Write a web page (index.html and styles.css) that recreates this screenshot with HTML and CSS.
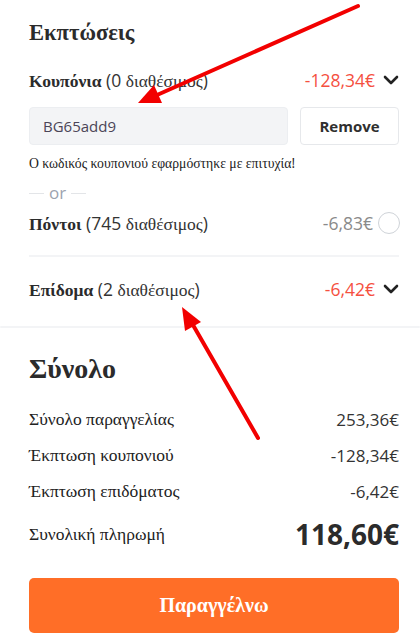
FILE: index.html
```html
<!DOCTYPE html>
<html lang="el">
<head>
<meta charset="utf-8">
<title>Εκπτώσεις</title>
<link rel="stylesheet" href="styles.css">
</head>
<body>
<div class="page">
  <section class="section discounts">
    <h2 class="title gr">Εκπτώσεις</h2>

    <div class="row coupon-row">
      <div class="label"><b class="gr">Κουπόνια</b> (0 <span class="gr">διαθέσιμος</span>)</div>
      <div class="value">
        <span class="amount red">-128,34€</span>
        <svg class="chev" width="16" height="10" viewBox="0 0 16 10"><path d="M2 2l6 6 6-6" fill="none" stroke="#222" stroke-width="2.6" stroke-linecap="round" stroke-linejoin="round"/></svg>
      </div>
    </div>

    <div class="coupon-form">
      <div class="code-input">BG65add9</div>
      <button class="remove-btn">Remove</button>
    </div>
    <p class="success gr">Ο κωδικός κουπονιού εφαρμόστηκε με επιτυχία<span class="os">!</span></p>

    <div class="or"><span class="or-line"></span><span class="or-text">or</span><span class="or-line"></span></div>

    <div class="row points-row">
      <div class="label"><b class="gr">Πόντοι</b> (745 <span class="gr">διαθέσιμος</span>)</div>
      <div class="value">
        <span class="amount gray">-6,83€</span>
        <span class="radio"></span>
      </div>
    </div>

    <div class="sep"></div>

    <div class="row bonus-row">
      <div class="label"><b class="gr">Επίδομα</b> (2 <span class="gr">διαθέσιμος</span>)</div>
      <div class="value">
        <span class="amount red">-6,42€</span>
        <svg class="chev" width="16" height="10" viewBox="0 0 16 10"><path d="M2 2l6 6 6-6" fill="none" stroke="#222" stroke-width="2.6" stroke-linecap="round" stroke-linejoin="round"/></svg>
      </div>
    </div>
  </section>

  <div class="divider-full"></div>

  <section class="section totals">
    <h2 class="big-title gr">Σύνολο</h2>
    <div class="trow"><span class="gr">Σύνολο παραγγελίας</span><span class="tval">253,36€</span></div>
    <div class="trow"><span class="gr">Έκπτωση κουπονιού</span><span class="tval">-128,34€</span></div>
    <div class="trow"><span class="gr">Έκπτωση επιδόματος</span><span class="tval">-6,42€</span></div>
    <div class="trow final"><span class="gr">Συνολική πληρωμή</span><span class="grand">118,60€</span></div>
    <button class="order-btn gr">Παραγγέλνω</button>
  </section>

  <svg class="annot" width="420" height="641" viewBox="0 0 420 641">
    <line x1="358" y1="6" x2="157" y2="95" stroke="#f20000" stroke-width="4" stroke-linecap="round"/>
    <polygon points="138,103 162,103 154,85" fill="#f20000"/>
    <line x1="258" y1="438" x2="193" y2="325" stroke="#f20000" stroke-width="4" stroke-linecap="round"/>
    <polygon points="182,307 201,322 185,331" fill="#f20000"/>
  </svg>
</div>
</body>
</html>
```

FILE: styles.css
```css
* { box-sizing: border-box; }
html, body { margin: 0; padding: 0; background: #fff; }
body {
  font-family: "Open Sans", "DejaVu Sans", sans-serif;
  color: #333;
  width: 420px;
  height: 641px;
  overflow: hidden;
}
.page { position: relative; }
.gr { font-family: "Liberation Serif", "DejaVu Serif", serif; }
.os { font-family: "Open Sans", sans-serif; }

.section { padding: 0 21px 0 29px; }
.discounts { padding-top: 18px; padding-bottom: 25px; }

.title {
  margin: 0;
  font-size: 22.6px;
  line-height: 30px;
  font-weight: bold;
  color: #2b2b2b;
}

.row {
  display: flex;
  justify-content: space-between;
  align-items: center;
  height: 24px;
  font-size: 17.5px;
  color: #333;
}
.label b { font-weight: bold; color: #2b2b2b; }
.value { display: flex; align-items: center; gap: 7px; }
.amount { font-size: 17.5px; }
.red { color: #f5503f; }
.gray { color: #8a8a8a; }
.chev { display: block; margin-left: 1px; }

.coupon-row { margin-top: 20px; }

.coupon-form {
  display: flex;
  gap: 12px;
  margin-top: 15px;
  height: 38px;
}
.code-input {
  flex: 1;
  background: #f3f4f6;
  border: 1px solid #eceef1;
  border-radius: 4px;
  display: flex;
  align-items: center;
  padding-left: 13px;
  font-size: 15px;
  color: #4b4557;
}
.remove-btn {
  width: 99px;
  background: #fff;
  border: 1px solid #e6e8eb;
  border-radius: 4px;
  font-family: "Open Sans", sans-serif;
  font-weight: bold;
  font-size: 15px;
  color: #2f2f2f;
}

.success {
  margin: 8px 0 0;
  font-size: 13.7px;
  line-height: 20px;
  color: #222;
}

.or {
  display: flex;
  align-items: center;
  gap: 5px;
  height: 16px;
  margin-top: 11px;
}
.or-line { width: 15px; height: 1px; background: #e3e5e8; }
.or-text { font-size: 17px; color: #9ca3af; line-height: 16px; }

.points-row { margin-top: 10px; }
.radio {
  width: 22px;
  height: 22px;
  border: 1px solid #cfd3d8;
  border-radius: 50%;
  margin-left: -2px;
  margin-right: -1px;
}

.sep { height: 2px; background: #f3f4f6; margin-top: 20px; }
.bonus-row { margin-top: 20px; }

.divider-full { height: 2px; background: #f3f4f6; border-radius: 2px; }

.totals { padding-top: 22px; }
.big-title {
  margin: 0;
  font-size: 28px;
  line-height: 38px;
  font-weight: bold;
  color: #2b2b2b;
}
.trow {
  display: flex;
  justify-content: space-between;
  align-items: center;
  height: 36px;
  font-size: 17.5px;
  color: #222;
}
.totals .big-title + .trow { margin-top: 13px; }
.tval { font-size: 17px; color: #333; }
.final { height: 50px; }
.grand { font-size: 28px; font-weight: bold; color: #2b2b2b; }

.order-btn {
  display: block;
  width: 100%;
  height: 55px;
  margin-top: 19px;
  border: 0;
  border-radius: 5px;
  background: #ff6e27;
  color: #fff;
  font-size: 20px;
  font-weight: bold;
}

.annot { position: absolute; left: 0; top: 0; pointer-events: none; }
```
